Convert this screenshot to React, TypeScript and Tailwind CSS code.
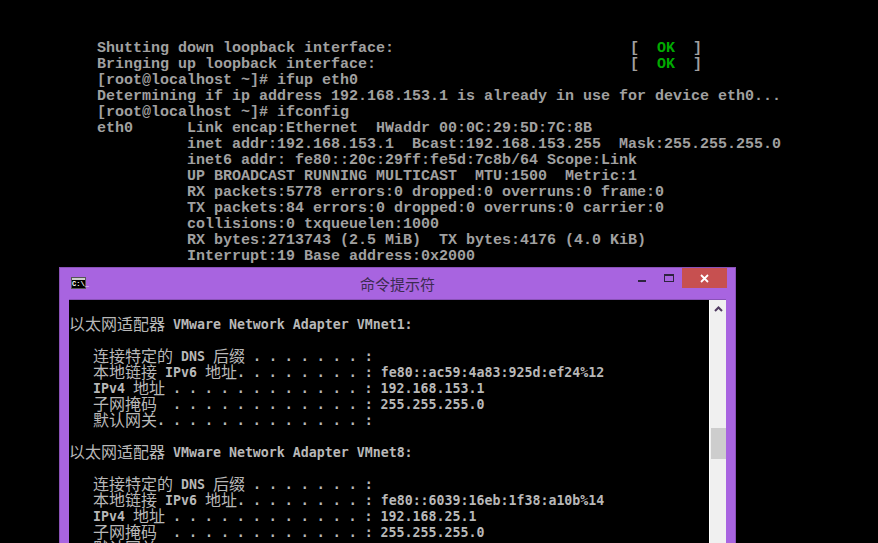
import React from 'react';

const linuxLines = [
  'Bringing up loopback interface:',
  '[root@localhost ~]# ifup eth0',
  'Determining if ip address 192.168.153.1 is already in use for device eth0...',
  '[root@localhost ~]# ifconfig',
  'eth0      Link encap:Ethernet  HWaddr 00:0C:29:5D:7C:8B',
  '          inet addr:192.168.153.1  Bcast:192.168.153.255  Mask:255.255.255.0',
  '          inet6 addr: fe80::20c:29ff:fe5d:7c8b/64 Scope:Link',
  '          UP BROADCAST RUNNING MULTICAST  MTU:1500  Metric:1',
  '          RX packets:5778 errors:0 dropped:0 overruns:0 frame:0',
  '          TX packets:84 errors:0 dropped:0 overruns:0 carrier:0',
  '          collisions:0 txqueuelen:1000',
  '          RX bytes:2713743 (2.5 MiB)  TX bytes:4176 (4.0 KiB)',
  '          Interrupt:19 Base address:0x2000',
];

const cmdLines = [
  '',
  '以太网适配器 VMware Network Adapter VMnet1:',
  '',
  '   连接特定的 DNS 后缀 . . . . . . . :',
  '   本地链接 IPv6 地址. . . . . . . . : fe80::ac59:4a83:925d:ef24%12',
  '   IPv4 地址 . . . . . . . . . . . . : 192.168.153.1',
  '   子网掩码  . . . . . . . . . . . . : 255.255.255.0',
  '   默认网关. . . . . . . . . . . . . :',
  '',
  '以太网适配器 VMware Network Adapter VMnet8:',
  '',
  '   连接特定的 DNS 后缀 . . . . . . . :',
  '   本地链接 IPv6 地址. . . . . . . . : fe80::6039:16eb:1f38:a10b%14',
  '   IPv4 地址 . . . . . . . . . . . . : 192.168.25.1',
  '   子网掩码  . . . . . . . . . . . . : 255.255.255.0',
  '   默认网关. . . . . . . . . . . . . :',
];

function CmdLine({ text }: { text: string }) {
  const parts = text.split(/([\u4e00-\u9fff]+)/);
  return (
    <div className="h-4 whitespace-pre">
      {parts.map((p, i) =>
        /[\u4e00-\u9fff]/.test(p) ? (
          <span key={i} className="align-[-1px] font-['Noto_Sans_CJK_SC',sans-serif] text-[16px] font-normal leading-4">{p}</span>
        ) : (
          <span key={i}>{p}</span>
        )
      )}
    </div>
  );
}

export default function App() {
  return (
    <div className="flex h-[543px] w-[878px] flex-col overflow-hidden bg-black">
      {/* linux console */}
      <div className="pl-[97px] pt-[41px] font-['Liberation_Mono',monospace] text-[15px] font-bold leading-4 text-[#a0a0a0]">
        <div className="flex h-4 whitespace-pre">
          <span className="w-[533px]">Shutting down loopback interface:</span>
          <span>[  <span className="text-[#00aa00]">OK</span>  ]</span>
        </div>
        {linuxLines.map((l, i) =>
          i === 0 ? (
            <div key={i} className="flex h-4 whitespace-pre">
              <span className="w-[533px]">{l}</span>
              <span>[  <span className="text-[#00aa00]">OK</span>  ]</span>
            </div>
          ) : (
            <div key={i} className="h-4 whitespace-pre">{l}</div>
          )
        )}
      </div>

      {/* cmd window */}
      <div className="ml-[59px] mt-0.5 flex min-h-0 w-[677px] flex-1 flex-col overflow-hidden border-x border-t border-[#8a52b8] bg-[#a864e0]">
        <div className="relative flex h-[31px] shrink-0 items-center justify-center">
          <div className="absolute left-[11px] top-[9px] flex h-[12px] w-[15px] flex-col border border-[#555] bg-black">
            <div className="h-[2px] bg-[#ccc]" />
            <span className="font-['Liberation_Mono',monospace] text-[7px] font-bold leading-[8px] text-white">C:\_</span>
          </div>
          <span className="font-['Noto_Sans_CJK_SC',sans-serif] text-[15px] leading-none text-[#3c2a50]">命令提示符</span>
          <div className="absolute right-[8px] top-0 flex h-[20px] items-start">
            <div className="mt-[12px] mr-[18px] h-[2px] w-[8px] bg-[#2e2440]" />
            <div className="mt-[6px] mr-[8px] h-[8px] w-[10px] border border-t-2 border-[#2e2440]" />
            <div className="flex h-[20px] w-[45px] items-center justify-center bg-[#c75050]">
              <svg width="9" height="9" viewBox="0 0 9 9">
                <path d="M1 1 L8 8 M8 1 L1 8" stroke="#fff" strokeWidth="1.8" fill="none" />
              </svg>
            </div>
          </div>
        </div>
        <div className="mx-[9px] flex min-h-0 flex-1 border-t border-[#8a52b8]">
          <div className="min-w-0 flex-1 overflow-hidden bg-black font-['DejaVu_Sans_Mono',monospace] text-[13.28px] font-bold leading-4 text-[#b8b8b8]">
            <div className="-mt-[1px]">
              {cmdLines.map((l, i) => (
                <CmdLine key={i} text={l} />
              ))}
            </div>
          </div>
          <div className="flex w-[17px] shrink-0 flex-col items-center border-l border-white bg-[#f0f0f0]">
            <svg className="mt-[6px]" width="9" height="6" viewBox="0 0 9 6">
              <path d="M1 5 L4.5 1.5 L8 5" stroke="#503a60" strokeWidth="2" fill="none" />
            </svg>
            <div className="mt-[116px] h-[31px] w-[15px] bg-[#cdcdcd]" />
          </div>
        </div>
      </div>
    </div>
  );
}
